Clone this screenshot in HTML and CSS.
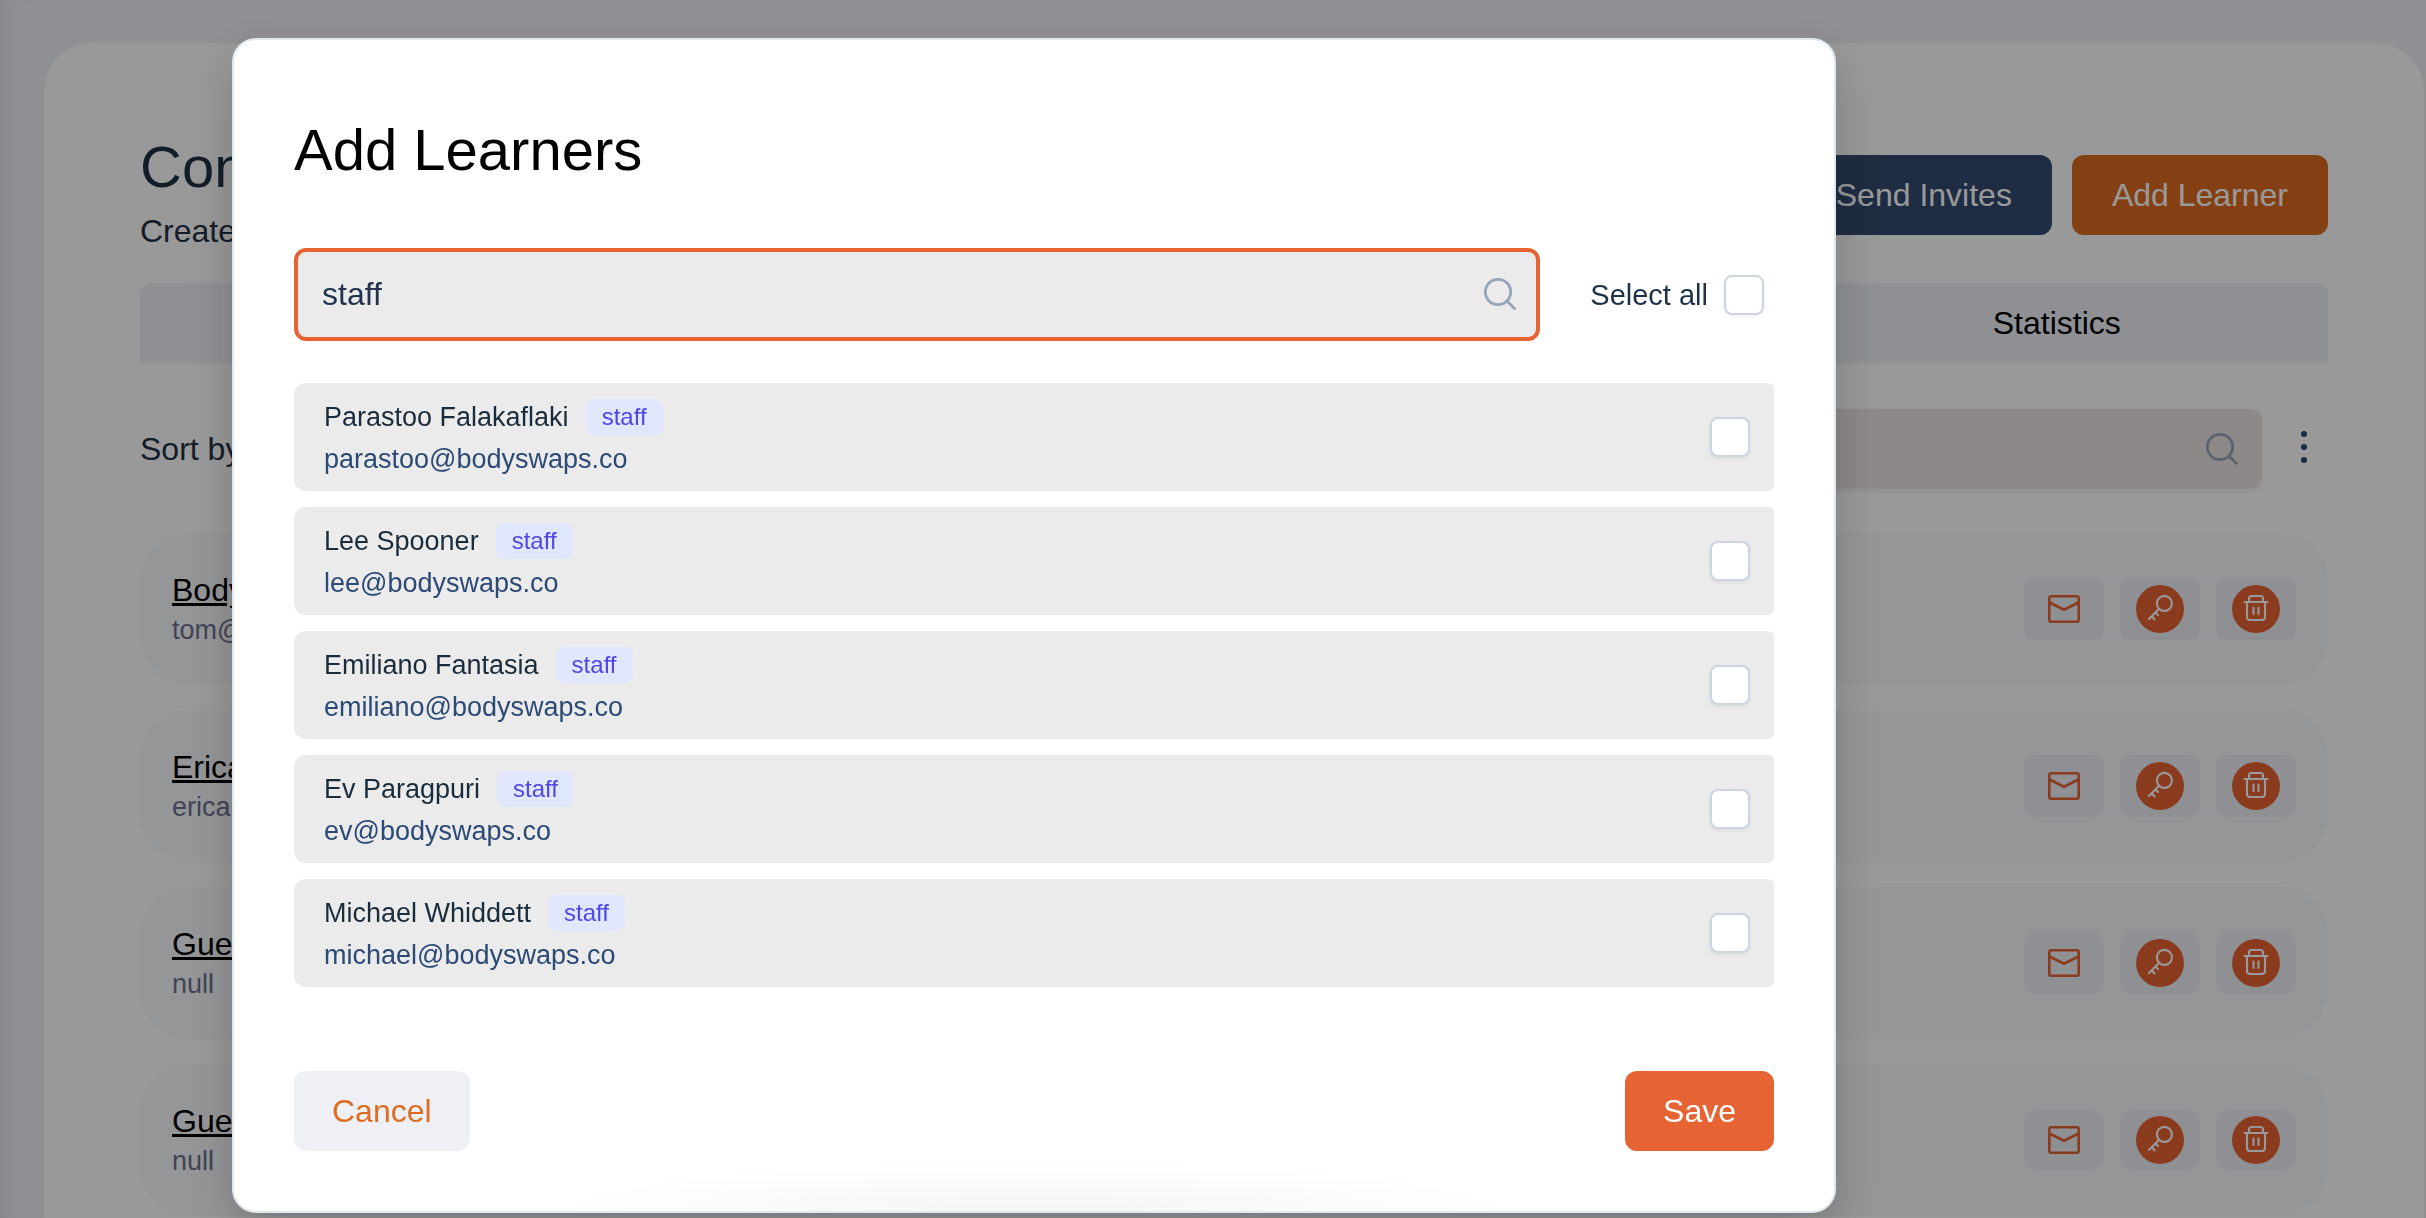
FILE: index.html
```
<!DOCTYPE html>
<html lang="en">

<head>
    <meta charset="UTF-8">
    <meta name="viewport" content="width=device-width, initial-scale=1.0">
    <title>Add Learners</title>
    <link rel="stylesheet" href="styles.css">
</head>

<body>
    <!-- shared icons -->
    <svg class="sprite" width="0" height="0" aria-hidden="true">
        <symbol id="icon-search" viewBox="0 0 32 32">
            <circle cx="14" cy="14" r="12.7" fill="none" stroke="currentColor" stroke-width="2.8" />
            <path d="M23 23 L30.5 30.5" fill="none" stroke="currentColor" stroke-width="2.8" stroke-linecap="round" />
        </symbol>
        <symbol id="icon-mail" viewBox="0 0 32 28">
            <rect x="1.3" y="1.3" width="29.4" height="25.4" rx="2" fill="none" stroke="currentColor" stroke-width="2.6" />
            <path d="M1.5 7.5 L16 14.7 L30.5 7.5" fill="none" stroke="currentColor" stroke-width="2.6" />
        </symbol>
        <symbol id="icon-key" viewBox="0 0 48 48">
            <circle cx="24" cy="24" r="24" fill="#e66333" />
            <g fill="none" stroke="#fff" stroke-width="2.1" stroke-linecap="round" stroke-linejoin="round">
                <circle cx="28.4" cy="18.4" r="7.5" />
                <path d="M22.8 24 L13 34 M19.5 27.5 L22 30 M15.8 31.2 L18.5 34.5" />
            </g>
        </symbol>
        <symbol id="icon-trash" viewBox="0 0 48 48">
            <circle cx="24" cy="24" r="24" fill="#e66333" />
            <g fill="none" stroke="#fff" stroke-width="2.1" stroke-linecap="round" stroke-linejoin="round">
                <path d="M12.5 17 H35.5" />
                <path d="M17 16.5 V13.5 Q17 11 19.5 11 H28.5 Q31 11 31 13.5 V16.5" />
                <path d="M15 17.5 V32 Q15 35 18 35 H30 Q33 35 33 32 V17.5" />
                <path d="M21.5 22.5 V29 M26.5 22.5 V29" />
            </g>
        </symbol>
    </svg>

    <main class="panel">
        <header class="panelHeader">
            <div>
                <h1>Con</h1>
                <p>Create</p>
            </div>
            <div class="headerButtons">
                <button class="btn navy">Send Invites</button>
                <button class="btn orange">Add Learner</button>
            </div>
        </header>

        <nav class="tabs">
            <button></button>
            <button></button>
            <button></button>
            <button>Statistics</button>
        </nav>

        <div class="toolbar">
            <span>Sort by</span>
            <div class="search">
                <input type="text" aria-label="Search">
                <svg class="searchIcon"><use href="#icon-search" /></svg>
            </div>
            <button class="dots" aria-label="More">
                <svg width="6" height="32" viewBox="0 0 6 32">
                    <circle cx="3" cy="3" r="3" />
                    <circle cx="3" cy="16" r="3" />
                    <circle cx="3" cy="29" r="3" />
                </svg>
            </button>
        </div>

        <div class="people">
            <div class="person">
                <div>
                    <a href="#">Bodyswaps</a>
                    <p>tom@bodyswaps.co</p>
                </div>
                <div class="actions">
                    <button aria-label="Email"><svg class="mail"><use href="#icon-mail" /></svg></button>
                    <button aria-label="Password"><svg class="round"><use href="#icon-key" /></svg></button>
                    <button aria-label="Delete"><svg class="round"><use href="#icon-trash" /></svg></button>
                </div>
            </div>
            <div class="person">
                <div>
                    <a href="#">Erica</a>
                    <p>erica</p>
                </div>
                <div class="actions">
                    <button aria-label="Email"><svg class="mail"><use href="#icon-mail" /></svg></button>
                    <button aria-label="Password"><svg class="round"><use href="#icon-key" /></svg></button>
                    <button aria-label="Delete"><svg class="round"><use href="#icon-trash" /></svg></button>
                </div>
            </div>
            <div class="person">
                <div>
                    <a href="#">Guest</a>
                    <p>null</p>
                </div>
                <div class="actions">
                    <button aria-label="Email"><svg class="mail"><use href="#icon-mail" /></svg></button>
                    <button aria-label="Password"><svg class="round"><use href="#icon-key" /></svg></button>
                    <button aria-label="Delete"><svg class="round"><use href="#icon-trash" /></svg></button>
                </div>
            </div>
            <div class="person">
                <div>
                    <a href="#">Guest</a>
                    <p>null</p>
                </div>
                <div class="actions">
                    <button aria-label="Email"><svg class="mail"><use href="#icon-mail" /></svg></button>
                    <button aria-label="Password"><svg class="round"><use href="#icon-key" /></svg></button>
                    <button aria-label="Delete"><svg class="round"><use href="#icon-trash" /></svg></button>
                </div>
            </div>
        </div>
    </main>

    <div class="overlay">
        <form class="modal" role="dialog" aria-labelledby="modalTitle">
            <h2 id="modalTitle">Add Learners</h2>

            <div class="filter">
                <div class="search active">
                    <input type="text" value="staff" aria-label="Search learners">
                    <svg class="searchIcon"><use href="#icon-search" /></svg>
                </div>
                <label class="selectAll" for="selectAll">Select all
                    <input id="selectAll" type="checkbox">
                </label>
            </div>

            <div class="learners">
                <label class="learner">
                    <span>
                        <span class="name">Parastoo Falakaflaki <span class="tag">staff</span></span>
                        <span class="email">parastoo@bodyswaps.co</span>
                    </span>
                    <input type="checkbox">
                </label>
                <label class="learner">
                    <span>
                        <span class="name">Lee Spooner <span class="tag">staff</span></span>
                        <span class="email">lee@bodyswaps.co</span>
                    </span>
                    <input type="checkbox">
                </label>
                <label class="learner">
                    <span>
                        <span class="name">Emiliano Fantasia <span class="tag">staff</span></span>
                        <span class="email">emiliano@bodyswaps.co</span>
                    </span>
                    <input type="checkbox">
                </label>
                <label class="learner">
                    <span>
                        <span class="name">Ev Paragpuri <span class="tag">staff</span></span>
                        <span class="email">ev@bodyswaps.co</span>
                    </span>
                    <input type="checkbox">
                </label>
                <label class="learner">
                    <span>
                        <span class="name">Michael Whiddett <span class="tag">staff</span></span>
                        <span class="email">michael@bodyswaps.co</span>
                    </span>
                    <input type="checkbox">
                </label>
            </div>

            <div class="modalButtons">
                <button type="button" class="btn cancel">Cancel</button>
                <button type="button" class="btn save">Save</button>
            </div>
        </form>
    </div>
</body>

</html>
```
FILE: styles.css
```
* {
    box-sizing: border-box;
    margin: 0;
    padding: 0;
}

body {
    background-color: #eff0f6;
    font-family: "Liberation Sans", Arial, sans-serif;
    font-size: 32px;
    line-height: 40px;
    color: #1f3147;
    height: 100vh;
    overflow: hidden;
    padding: 43px 2px 0 44px;
    box-shadow: inset 20px 0 24px -20px rgba(0, 0, 0, 0.1);
}

button,
input {
    font: inherit;
    border: none;
}

button {
    cursor: pointer;
}

h1,
h2 {
    font-size: 58px;
    line-height: 72px;
    font-weight: normal;
}

.sprite {
    position: absolute;
}


/* page behind the modal */
.panel {
    background-color: #fff;
    border-radius: 48px 48px 0 0;
    padding: 88px 96px 0;
    height: 100%;
    overflow: hidden;
}

.panelHeader {
    display: flex;
    justify-content: space-between;
    align-items: center;
    height: 128px;
}

.panelHeader h1,
.panelHeader p {
    margin-bottom: 8px;
}

.headerButtons {
    display: flex;
    gap: 20px;
}

.btn {
    height: 80px;
    padding: 0 38px;
    border-radius: 12px;
    color: #fff;
}

.headerButtons .btn {
    padding: 0 40px;
}

.navy {
    background-color: #334b70;
}

.orange {
    background-color: #dd6b20;
}

.tabs {
    display: grid;
    grid-template-columns: repeat(4, 1fr);
    gap: 6px;
    margin-top: 24px;
}

.tabs button {
    height: 80px;
    background-color: #eff0f6;
    border-radius: 12px 12px 0 0;
    color: #000;
}

.toolbar {
    display: flex;
    align-items: center;
    gap: 39px;
    margin: 46px 21px 44px 0;
}

.search {
    flex: 1;
    display: flex;
    align-items: center;
    height: 80px;
    padding: 0 24px;
    background-color: #ebe4e4;
    border-radius: 12px;
    box-shadow: 0 2px 4px rgba(0, 0, 0, 0.06);
}

.search input {
    flex: 1;
    min-width: 0;
    background: none;
    color: #22324f;
    outline: none;
}

.searchIcon {
    width: 32px;
    height: 32px;
    color: #94a3b8;
}

.dots {
    background: none;
    display: flex;
    padding-bottom: 4px;
    fill: #2c4470;
}

.people {
    display: grid;
    gap: 25px;
}

.person {
    display: flex;
    justify-content: space-between;
    align-items: center;
    height: 152px;
    padding: 0 32px;
    background-color: #f8fafc;
    border-radius: 48px;
}

.person a {
    color: #000;
    text-decoration-thickness: 3px;
}

.person p {
    margin-top: 2px;
    font-size: 27px;
    line-height: 36px;
    color: #6e7191;
}

.actions {
    display: flex;
    gap: 16px;
}

.actions button {
    display: flex;
    align-items: center;
    justify-content: center;
    width: 80px;
    height: 62px;
    border-radius: 12px;
    background-color: #eff0f6;
}

.mail {
    width: 32px;
    height: 28px;
    color: #e66333;
}

.round {
    width: 48px;
    height: 48px;
}


/* modal */
.overlay {
    position: fixed;
    inset: 0;
    padding: 38px 232px 0;
    background-color: rgba(0, 0, 0, 0.4);
}

.modal {
    max-width: 1604px;
    padding: 74px 60px 60px;
    background: radial-gradient(ellipse 500px 50px at 50% 100%, #f5f5f5, #fff) no-repeat #fff;
    border: 2px solid #e2e8f0;
    border-radius: 24px;
    box-shadow: 0 20px 50px rgba(0, 0, 0, 0.2);
}

.modal h2 {
    color: #000;
}

.filter {
    display: flex;
    align-items: center;
    gap: 50px;
    margin: 62px 10px 42px 0;
}

.active {
    height: 93px;
    background-color: #ebebeb;
    border: 4px solid #e66333;
    box-shadow: none;
    padding: 0 20px 2px 24px;
}

.selectAll {
    display: flex;
    align-items: center;
    gap: 16px;
    font-size: 29px;
}

input[type="checkbox"] {
    appearance: none;
    width: 40px;
    height: 40px;
    background-color: #fff;
    border: 2px solid #cbd5e1;
    border-radius: 8px;
    box-shadow: 0 2px 4px rgba(0, 0, 0, 0.06);
}

.learners {
    display: grid;
    gap: 16px;
}

.learner {
    display: flex;
    justify-content: space-between;
    align-items: center;
    height: 108px;
    padding: 0 24px 0 30px;
    background-color: #ebebeb;
    border-radius: 12px 6px 6px 12px;
    font-size: 27px;
}

.name {
    display: flex;
    align-items: center;
    gap: 17px;
    line-height: 44px;
    color: #1a2b3c;
}

.email {
    display: block;
    color: #2c4a76;
}

.tag {
    padding: 0 16px;
    font-size: 24px;
    line-height: 36px;
    border-radius: 8px;
    background-color: #e0e7ff;
    color: #4f46e5;
}

.modalButtons {
    display: flex;
    justify-content: space-between;
    margin-top: 84px;
}

.cancel {
    background-color: #eff0f6;
    color: #dd6b20;
}

.save {
    background-color: #e66333;
}
```
